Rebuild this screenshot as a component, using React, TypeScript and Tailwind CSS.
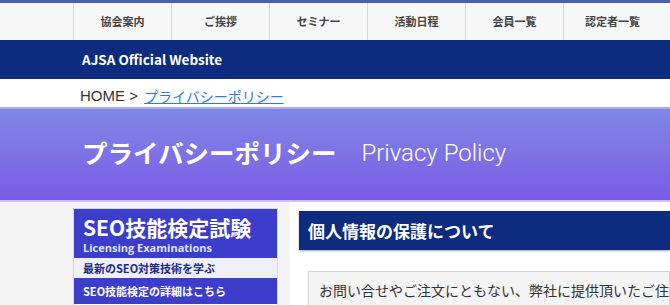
const jp = { fontFamily: '"Noto Sans CJK JP", "Noto Sans", sans-serif' };

const navItems = ["協会案内", "ご挨拶", "セミナー", "活動日程", "会員一覧", "認定者一覧"];

export default function App() {
  return (
    <div className="w-[670px] h-[305px] overflow-hidden bg-white" style={jp}>
      {/* top line */}
      <div className="h-[3px] bg-[#4b5fae]" />

      {/* global nav */}
      <nav className="flex h-[37px] bg-[#f7f7f7] pl-[73px]">
        {navItems.map((item) => (
          <div
            key={item}
            className="flex w-[98px] shrink-0 items-center justify-center border-l border-[#dadada] text-[11px] font-bold text-[#444]"
          >
            {item}
          </div>
        ))}
      </nav>

      {/* site name bar */}
      <div className="flex h-[39px] items-center bg-[#0d2c7f] pl-[82px]">
        <span className="text-[13.5px] font-bold text-white">AJSA Official Website</span>
      </div>

      {/* breadcrumb */}
      <div className="flex h-[28px] items-center pl-[80px] pt-[6px] text-[#333]">
        <span className="mr-[6px] text-[15px]" style={{ fontFamily: '"Liberation Sans", sans-serif' }}>
          HOME &gt;
        </span>
        <a href="#" className="text-[14px] text-[#2a7ae6] underline">
          プライバシーポリシー
        </a>
      </div>

      {/* page title */}
      <div className="flex h-[93px] items-center border-t-2 border-[#a9aef0] bg-gradient-to-b from-[#7f87e4] to-[#7b5ae6] pl-[82px] pb-[4px]">
        <h1 className="text-[25.5px] font-bold text-white">プライバシーポリシー</h1>
        <span
          className="ml-[25px] text-[24px] font-light text-white"
          style={{ fontFamily: "Roboto, sans-serif" }}
        >
          Privacy Policy
        </span>
      </div>
      <div className="h-[2px] bg-[#c9c2f4]" />

      {/* body */}
      <div className="flex bg-[#f4f4f4] pl-[73px]">
        <aside className="mt-[6px] w-[205px] shrink-0 border border-[#d4d4e4] bg-white">
          <div className="bg-[#3c3dcb] px-[9px] pt-[8px] pb-[5px] text-white">
            <div className="text-[21px] font-bold leading-none">SEO技能検定試験</div>
            <div
              className="mt-[4px] text-[11px] font-bold leading-none text-[#dfe2ff]"
              style={{ fontFamily: '"Open Sans", sans-serif' }}
            >
              Licensing Examinations
            </div>
          </div>
          <div className="flex h-[20px] items-center bg-[#eff0f8] px-[9px] text-[11px] font-bold text-[#1b2a86]">
            最新のSEO対策技術を学ぶ
          </div>
          <div className="flex h-[26px] items-center bg-[#3c3dcb] px-[9px] text-[11px] font-bold text-white">
            SEO技能検定の詳細はこちら
          </div>
        </aside>

        <main className="ml-[12px] h-[110px] min-w-0 flex-1 overflow-hidden bg-white pt-[9px] pl-[9px]">
          <div className="flex h-[39px] items-center bg-[#0d2c7f] pl-[9px] shadow-[0_1px_2px_rgba(0,0,0,0.35)]">
            <h2 className="text-[17px] font-bold text-white">個人情報の保護について</h2>
          </div>
          <div className="ml-[9px] mt-[21px] overflow-hidden whitespace-nowrap border border-[#d2d2d2] bg-[#f4f4f4] pl-[10px] pt-[8px] pb-[8px] text-[14px] text-[#333]">
            お問い合せやご注文にともない、弊社に提供頂いたご住所
          </div>
        </main>
      </div>
    </div>
  );
}
